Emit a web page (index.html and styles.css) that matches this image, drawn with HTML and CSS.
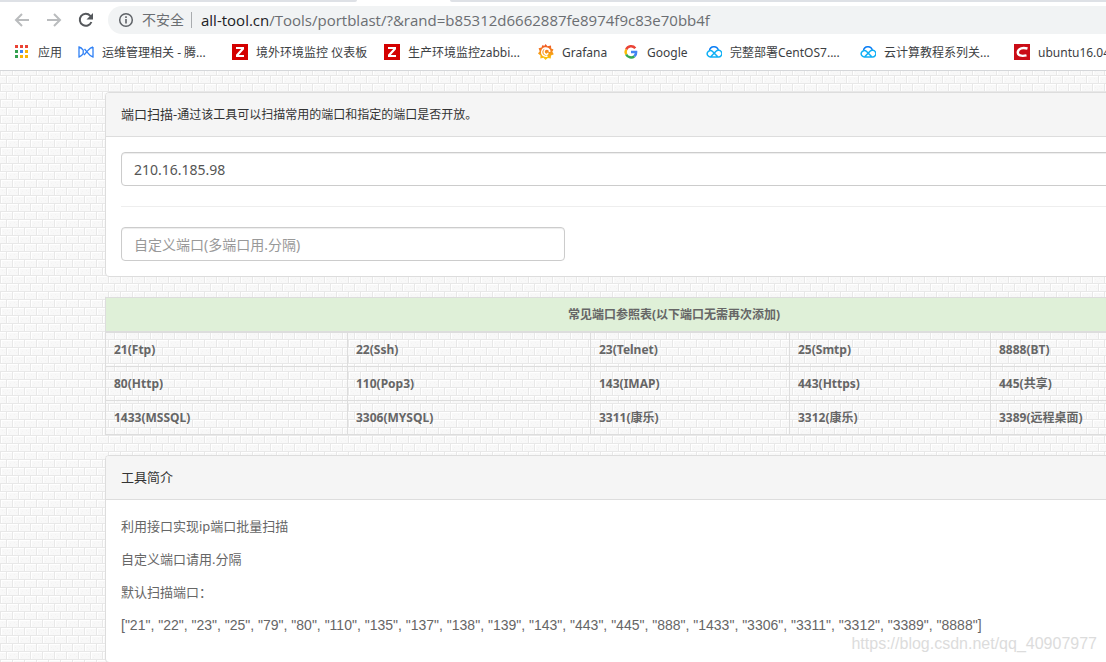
FILE: index.html
```html
<!DOCTYPE html>
<html lang="zh-CN">
<head>
<meta charset="utf-8">
<title>端口扫描</title>
<link rel="stylesheet" href="styles.css">
</head>
<body>
<div class="tabstrip"><span class="tab-left"></span><span class="tab-active"></span><span class="tab-right"></span></div>
<header class="browser">
  <div class="toolbar">
    <button class="nav" aria-label="后退"><svg width="16" height="16" viewBox="0 0 16 16"><path d="M15 8H2M8 2L2 8l6 6" fill="none" stroke="#babcbe" stroke-width="2"/></svg></button>
    <button class="nav" aria-label="前进"><svg width="16" height="16" viewBox="0 0 16 16"><path d="M1 8h13M8 2l6 6-6 6" fill="none" stroke="#babcbe" stroke-width="2"/></svg></button>
    <button class="nav" aria-label="刷新"><svg width="16" height="16" viewBox="0 0 16 16"><path d="M13.4 10A6 6 0 1 1 12.3 3.8L14 5.600" fill="none" stroke="#55585c" stroke-width="2"/><path d="M15 1v6.500H8.500z" fill="#55585c"/></svg></button>
    <div class="omnibox">
      <svg width="16" height="16" viewBox="0 0 16 16"><circle cx="8" cy="8" r="6.300" fill="none" stroke="#5f6368" stroke-width="1.500"/><path d="M7.200 7h1.600v4.500H7.200zM7.200 4.300h1.600v1.600H7.200z" fill="#5f6368"/></svg>
      <span class="secure">不安全</span>
      <span class="url"><b>all-tool.cn</b>/Tools/portblast/?&amp;rand=b85312d6662887fe8974f9c83e70bb4f</span>
    </div>
  </div>
  <nav class="bookmarks">
    <a class="bm" href="#"><svg width="16" height="16" viewBox="0 0 16 16"><g fill="#ea4335"><path d="M1 1h3v3H1zM6 1h3v3H6zM11 1h3v3h-3z"/></g><path d="M1 6h3v3H1zM1 11h3v3H1z" fill="#34a04f"/><path d="M6 6h3v3H6z" fill="#4285f4"/><path d="M11 6h3v3h-3zM6 11h3v3H6zM11 11h3v3h-3z" fill="#fbb405"/></svg><span>应用</span></a>
    <a class="bm wide" href="#"><svg width="16" height="16" viewBox="0 0 16 16"><path d="M1 3v10c1.700-.3 3-1.500 4.200-3.300V6.200C4 4.500 2.700 3.300 1 3zM15 3v10c-2-.3-3.500-1.700-5-3.800L6.500 5M15 3c-2 .3-3.500 1.500-5 3.400L6 11" fill="none" stroke="#2f80f5" stroke-width="1.300"/></svg><span>运维管理相关 - 腾...</span></a>
    <a class="bm mid" href="#"><svg width="16" height="16" viewBox="0 0 16 16"><path d="M0 0h16v16H0z" fill="#d40000"/><path d="M4 3h8v2.200L6.800 11H12v2H4v-2.200L9.200 5H4z" fill="#fff"/></svg><span>境外环境监控 仪表板</span></a>
    <a class="bm wide" href="#"><svg width="16" height="16" viewBox="0 0 16 16"><path d="M0 0h16v16H0z" fill="#d40000"/><path d="M4 3h8v2.200L6.800 11H12v2H4v-2.200L9.200 5H4z" fill="#fff"/></svg><span>生产环境监控zabbi...</span></a>
    <a class="bm grafana" href="#"><svg width="16" height="16" viewBox="0 0 16 16"><defs><linearGradient id="gf" x2="0" y2="1"><stop stop-color="#ef4e28"/><stop offset="1" stop-color="#fcd20b"/></linearGradient></defs><path d="M7.500 0l2 2.300 3.500-.8.200 3 2.300 1-1.200 2.200 1.500 2.500-2.800 1.200-.2 3-3-.3L7.500 16l-2-2.200-3.200.6.200-3L0 9.500l1.700-2.200L.6 4.200l3-.6.600-2.400 2.300.6z" fill="url(#gf)"/><path d="M12 7.500A4.200 4.200 0 1 0 9.500 12M11.500 8A2.700 2.700 0 1 0 8.500 10.500Q10 10.300 10 8.800" fill="none" stroke="#fff" stroke-width="1.400"/></svg><span>Grafana</span></a>
    <a class="bm google" href="#"><svg width="16" height="16" viewBox="0 0 16 16"><g fill="none" stroke-width="2.500"><path d="M12.300 4.200A5.400 5.400 0 0 0 3.200 5.500" stroke="#ea4335"/><path d="M3.200 5.500a5.400 5.400 0 0 0 0 5" stroke="#fbbc05"/><path d="M3.200 10.500a5.400 5.400 0 0 0 8.200 1.700" stroke="#34a853"/><path d="M11.400 12.200A5 5 0 0 0 13.100 8H8" stroke="#4285f4"/></g></svg><span>Google</span></a>
    <a class="bm wide" href="#"><svg width="16" height="16" viewBox="0 0 16 16"><g fill="none" stroke-width="1.500"><path d="M3.500 6.500A4.500 4.500 0 0 1 12.300 6" stroke="#087cf5"/><path d="M4.500 13L10 7.300a3.400 3.400 0 1 1 2 5.700H4.200a3.200 3.200 0 1 1 2.400-5.500L11.500 12.500" stroke="#10b0f5"/></g></svg><span>完整部署CentOS7....</span></a>
    <a class="bm wide" href="#"><svg width="16" height="16" viewBox="0 0 16 16"><g fill="none" stroke-width="1.500"><path d="M3.500 6.500A4.500 4.500 0 0 1 12.300 6" stroke="#087cf5"/><path d="M4.500 13L10 7.300a3.400 3.400 0 1 1 2 5.700H4.200a3.200 3.200 0 1 1 2.400-5.500L11.500 12.500" stroke="#10b0f5"/></g></svg><span>云计算教程系列关...</span></a>
    <a class="bm wide" href="#"><svg width="16" height="16" viewBox="0 0 16 16"><path d="M0 0h16v16H0z" fill="#ca0c16"/><path d="M13.500 4.500C9 3.300 4.500 4 3.800 8c-.4 3.500 3.500 4.500 8.700 3.400" fill="none" stroke="#fff" stroke-width="2.400"/></svg><span>ubuntu16.04</span></a>
  </nav>
</header>
<main class="page">
  <div class="container">
    <section class="panel">
      <h1 class="panel-heading"><label for="host">端口扫描-<small>通过该工具可以扫描常用的端口和指定的端口是否开放。</small></label></h1>
      <div class="panel-body">
        <input class="field" id="host" type="text" value="210.16.185.98">
        <hr class="rule">
        <input class="field short" type="text" aria-label="自定义端口" placeholder="自定义端口(多端口用.分隔)">
      </div>
    </section>
    <table class="ports">
      <colgroup><col class="c1"><col class="c2"><col class="c3"><col class="c4"><col></colgroup>
      <thead><tr><th colspan="5">常见端口参照表(以下端口无需再次添加)</th></tr></thead>
      <tbody>
        <tr><td>21(Ftp)</td><td>22(Ssh)</td><td>23(Telnet)</td><td>25(Smtp)</td><td>8888(BT)</td></tr>
        <tr><td>80(Http)</td><td>110(Pop3)</td><td>143(IMAP)</td><td>443(Https)</td><td>445(共享)</td></tr>
        <tr><td>1433(MSSQL)</td><td>3306(MYSQL)</td><td>3311(康乐)</td><td>3312(康乐)</td><td>3389(远程桌面)</td></tr>
      </tbody>
    </table>
    <section class="panel">
      <h2 class="panel-heading">工具简介</h2>
      <div class="panel-body intro">
        <p>利用接口实现ip端口批量扫描</p>
        <p>自定义端口请用.分隔</p>
        <p>默认扫描端口：</p>
        <p class="list">["21", "22", "23", "25", "79", "80", "110", "135", "137", "138", "139", "143", "443", "445", "888", "1433", "3306", "3311", "3312", "3389", "8888"]</p>
      </div>
    </section>
  </div>
</main>
<div class="watermark">https://blog.csdn.net/qq_40907977</div>
</body>
</html>
```

FILE: styles.css
```css
* { box-sizing: border-box; }
body {
  margin: 0;
  min-height: 100vh;
  overflow: hidden;
  display: flex;
  flex-direction: column;
  font-family: "Noto Sans", "Noto Sans CJK SC", sans-serif;
  font-size: 13px;
  line-height: 23px;
  color: #666;
  background: #fff;
}
.tabstrip { display: flex; height: 2px; background: #fff; }
.tab-left { width: 357px; background: #dee1e6; border-bottom-right-radius: 2px; }
.tab-active { width: 93px; }
.tab-right { flex: 1; background: #dee1e6; border-bottom-left-radius: 2px; }
.browser { border-bottom: 1px solid #d5d7da; overflow: hidden; }
.toolbar { display: flex; align-items: center; gap: 16px; padding: 4px 0 0 14px; }
.nav { display: flex; width: 16px; height: 16px; padding: 0; border: 0; background: none; }
.omnibox {
  flex: 1;
  display: flex;
  align-items: center;
  height: 28px;
  margin-left: -2px;
  padding-left: 10px;
  border-radius: 14px 0 0 14px;
  background: #f1f3f4;
  color: #6b6e72;
  font-family: "Open Sans", "Noto Sans CJK SC", sans-serif;
  font-size: 14px;
  line-height: 16px;
  white-space: nowrap;
}
.secure { margin-left: 8px; padding-right: 7px; border-right: 1px solid #a9acaf; }
.url { margin-left: 9px; font-size: 15px; }
.url b { font-weight: 400; color: #202124; }
.bookmarks { display: flex; align-items: center; gap: 16px; height: 36px; padding-left: 14px; }
.bm {
  display: flex;
  flex: none;
  align-items: center;
  gap: 8px;
  color: #3c4043;
  font-size: 12px;
  line-height: 20px;
  text-decoration: none;
  white-space: nowrap;
}
.bm span { padding-top: 1px; }
.wide span { width: 114px; }
.mid span { width: 112px; }
.grafana span { width: 45px; }
.google span { width: 43px; }
.page {
  flex: 1;
  padding-top: 21px;
  overflow: hidden;
  background: #f8f8f8 url("data:image/svg+xml,%3Csvg xmlns='http://www.w3.org/2000/svg' width='12' height='16' shape-rendering='crispEdges'%3E%3Cpath fill='%23fff' d='M0 1h12v1H0zM0 9h12v1H0zM7 1h1v7H7zM1 9h1v7H1z'/%3E%3Cpath fill='%23e8e8e8' d='M0 0h12v1H0zM0 8h12v1H0zM6 1h1v7H6zM0 9h1v7H0z'/%3E%3Cpath fill='%23f3f3f3' d='M2 3h1v1H2zM10 4h1v1h-1zM4 5h1v1H4zM9 6h1v1H9zM3 12h1v1H3zM7 11h1v1H7zM5 14h1v1H5zM9 13h1v1H9z'/%3E%3C/svg%3E") 0 4px;
}
.container { min-width: 1140px; margin-left: 105px; }
.panel { margin-bottom: 20px; border: 1px solid #ddd; border-radius: 4px; background: #fff; }
.panel-heading {
  margin: 0;
  padding: 10px 15px;
  border-bottom: 1px solid #ddd;
  border-radius: 3px 3px 0 0;
  background: #f5f5f5;
  color: #333;
  font-size: 13px;
  font-weight: 400;
}
.panel-heading label { display: block; }
.panel-heading small { font-size: 12px; }
.panel-body { padding: 15px; }
.field {
  display: block;
  width: 100%;
  height: 34px;
  padding: 6px 12px;
  border: 1px solid #ccc;
  border-radius: 4px;
  background: #fff;
  box-shadow: inset 0 1px 1px rgba(0, 0, 0, .075);
  color: #555;
  font: 14px/20px "Noto Sans", "Noto Sans CJK SC", sans-serif;
}
.short { width: 40%; min-width: 444px; }
.field::placeholder { color: #999; opacity: 1; }
.rule { margin: 20px 0; border: 0; border-top: 1px solid #eee; }
.ports {
  width: 1138px;
  margin-bottom: 20px;
  border: 1px solid #ddd;
  border-collapse: collapse;
  table-layout: fixed;
  font-size: 12px;
  line-height: 17px;
  font-weight: 700;
}
.ports th, .ports td { padding: 8px; border: 1px solid #ddd; }
.ports thead th { background: #dff0d8; border-bottom-width: 2px; }
.c1 { width: 242px; }
.c2 { width: 243px; }
.c3 { width: 199px; }
.c4 { width: 201px; }
.intro p { margin: 0 0 10px; }
.intro .list { font-family: "Liberation Sans", sans-serif; font-size: 14px; }
.watermark {
  position: absolute;
  right: 9px;
  bottom: 8px;
  color: #dcdcdc;
  font: 16px/20px "Liberation Sans", sans-serif;
}
```
